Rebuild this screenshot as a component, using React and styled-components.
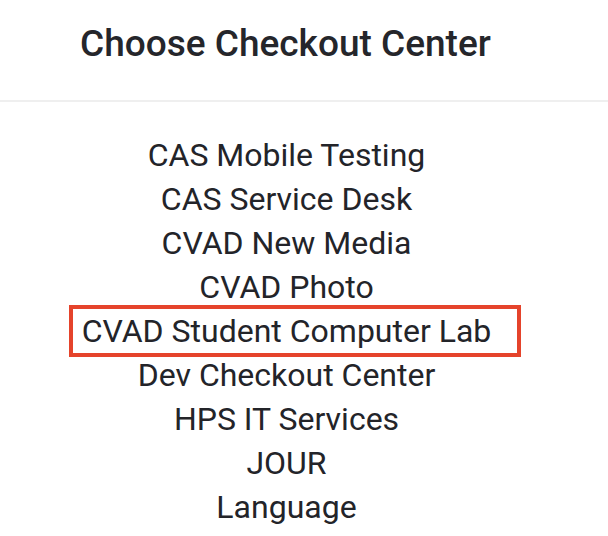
import React from 'react';
import styled, { createGlobalStyle } from 'styled-components';

const GlobalStyle = createGlobalStyle`
  html, body {
    margin: 0;
    padding: 0;
    background: #ffffff;
  }
  body {
    font-family: Roboto, "Liberation Sans", sans-serif;
    color: #232429;
  }
`;

const Page = styled.div`
  width: 608px;
  height: 536px;
  overflow: hidden;
  background: #ffffff;
`;

const Header = styled.div`
  height: 102px;
  border-bottom: 2px solid #efefef;
  box-sizing: border-box;
  padding: 20px 0 0 80px;
`;

const Title = styled.h1`
  margin: 0;
  font-size: 37px;
  font-weight: 500;
  line-height: 48px;
  color: #25262b;
  white-space: nowrap;
`;

const List = styled.ul`
  list-style: none;
  margin: 0;
  padding: 31px 35px 0 0;
  display: flex;
  flex-direction: column;
  align-items: center;
`;

const Item = styled.li`
  font-size: 32px;
  line-height: 44px;
  color: #232429;
  white-space: nowrap;
  ${({ $selected }) =>
    $selected &&
    `
    outline: 4px solid #e5432b;
    padding: 0 26px 0 9px;
    margin-left: 17px;
  `}
`;

const centers = [
  'CAS Mobile Testing',
  'CAS Service Desk',
  'CVAD New Media',
  'CVAD Photo',
  'CVAD Student Computer Lab',
  'Dev Checkout Center',
  'HPS IT Services',
  'JOUR',
  'Language',
];

export default function App() {
  return (
    <Page>
      <GlobalStyle />
      <Header>
        <Title>Choose Checkout Center</Title>
      </Header>
      <List>
        {centers.map((name) => (
          <Item key={name} $selected={name === 'CVAD Student Computer Lab'}>
            {name}
          </Item>
        ))}
      </List>
    </Page>
  );
}
